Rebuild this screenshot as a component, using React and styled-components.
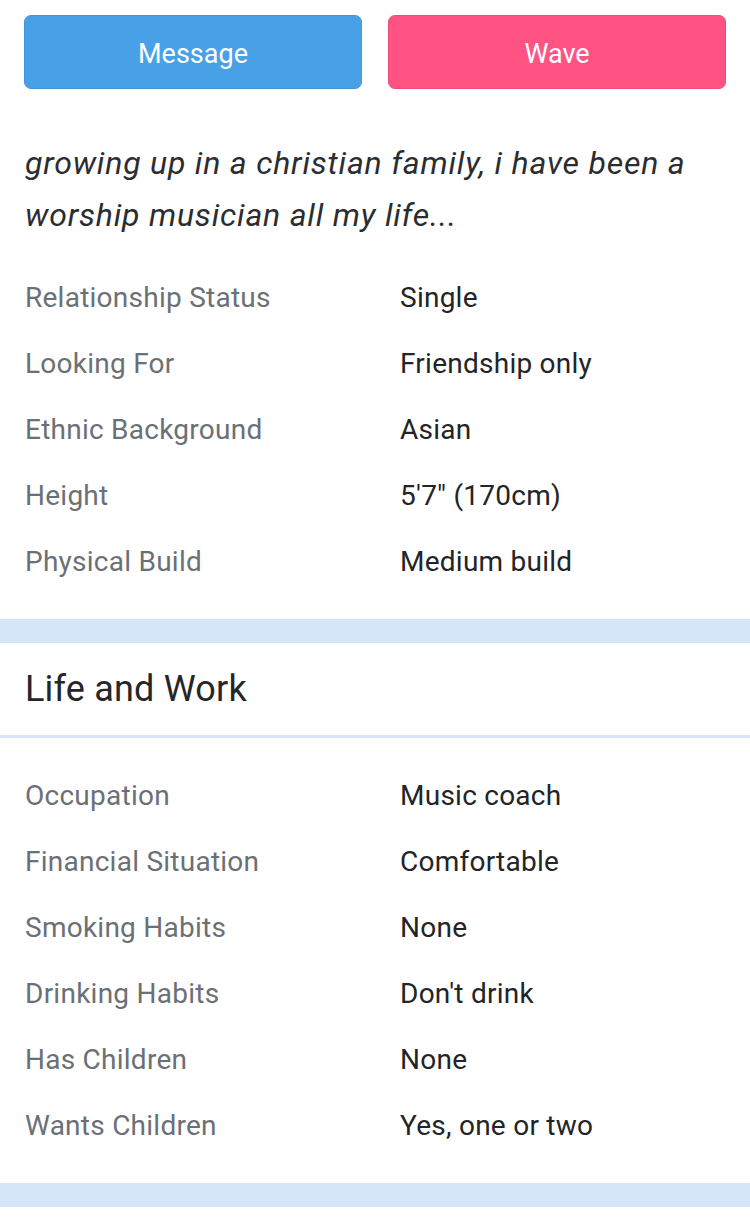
import React from "react";
import styled, { createGlobalStyle } from "styled-components";

const Global = createGlobalStyle`
  html, body { margin: 0; padding: 0; background: #ffffff; }
  body { font-family: Roboto, "Open Sans", Arial, sans-serif; -webkit-font-smoothing: antialiased; }
  * { box-sizing: border-box; }
`;

const Page = styled.div`
  width: 750px;
  background: #fff;
  display: flex;
  flex-direction: column;
`;

const Section = styled.section`
  display: flex;
  flex-direction: column;
  padding: ${(p) => p.$pad || "24px 0"};
`;

const ButtonRow = styled.div`
  display: grid;
  grid-template-columns: 1fr 1fr;
  gap: 26px;
  padding: 0 24px;
`;

const ActionButton = styled.button`
  height: 74px;
  border-radius: 7px;
  border: 1px solid ${(p) => (p.$tone === "pink" ? "#ef4b7b" : "#3f98dd")};
  background: ${(p) => (p.$tone === "pink" ? "#ff5384" : "#48a1e7")};
  color: #fff;
  font-family: Roboto, "Open Sans", Arial, sans-serif;
  font-size: 27px;
  font-weight: 400;
  display: flex;
  align-items: center;
  justify-content: center;
  padding: 4px 0 0;
  cursor: pointer;
`;

const Bio = styled.p`
  margin: 48px 0 23px;
  padding: 0 25px;
  font-family: Roboto, "Open Sans", Arial, sans-serif;
  font-style: italic;
  font-size: 32px;
  line-height: 52px;
  color: #2b2d30;
  letter-spacing: 0.8px;
`;

const Rows = styled.dl`
  margin: 0;
  padding-top: 1px;
  display: flex;
  flex-direction: column;
`;

const Row = styled.div`
  display: grid;
  grid-template-columns: 375px 1fr;
  padding-left: 25px;
  height: 66px;
  align-items: center;
  font-size: 28px;
  line-height: 66px;
  letter-spacing: 0.25px;
`;

const Label = styled.dt`
  margin: 0;
  color: #6b7076;
`;

const Value = styled.dd`
  margin: 0;
  color: #222427;
`;

const Band = styled.div`
  height: 24px;
  background: #d4e6f7;
`;

const Header = styled.h2`
  margin: 0;
  height: 95px;
  padding: 0 25px;
  line-height: 92px;
  font-size: 36px;
  font-weight: 400;
  color: #242629;
  border-bottom: 3px solid #d4e6f7;
  letter-spacing: 0.2px;
`;

const Tail = styled.div`
  height: 22px;
  background: #fff;
`;

const basics = [
  ["Relationship Status", "Single"],
  ["Looking For", "Friendship only"],
  ["Ethnic Background", "Asian"],
  ["Height", "5'7\" (170cm)"],
  ["Physical Build", "Medium build"],
];

const lifeWork = [
  ["Occupation", "Music coach"],
  ["Financial Situation", "Comfortable"],
  ["Smoking Habits", "None"],
  ["Drinking Habits", "Don't drink"],
  ["Has Children", "None"],
  ["Wants Children", "Yes, one or two"],
];

const DetailList = ({ items }) => (
  <Rows>
    {items.map(([k, v]) => (
      <Row key={k}>
        <Label>{k}</Label>
        <Value>{v}</Value>
      </Row>
    ))}
  </Rows>
);

export default function App() {
  return (
    <Page>
      <Global />
      <Section $pad="15px 0 24px">
        <ButtonRow>
          <ActionButton>Message</ActionButton>
          <ActionButton $tone="pink">Wave</ActionButton>
        </ButtonRow>
        <Bio>
          growing up in a christian family, i have been a worship musician all my life...
        </Bio>
        <DetailList items={basics} />
      </Section>
      <Band />
      <Header>Life and Work</Header>
      <Section $pad="24px 0 24px">
        <DetailList items={lifeWork} />
      </Section>
      <Band />
      <Tail />
    </Page>
  );
}
